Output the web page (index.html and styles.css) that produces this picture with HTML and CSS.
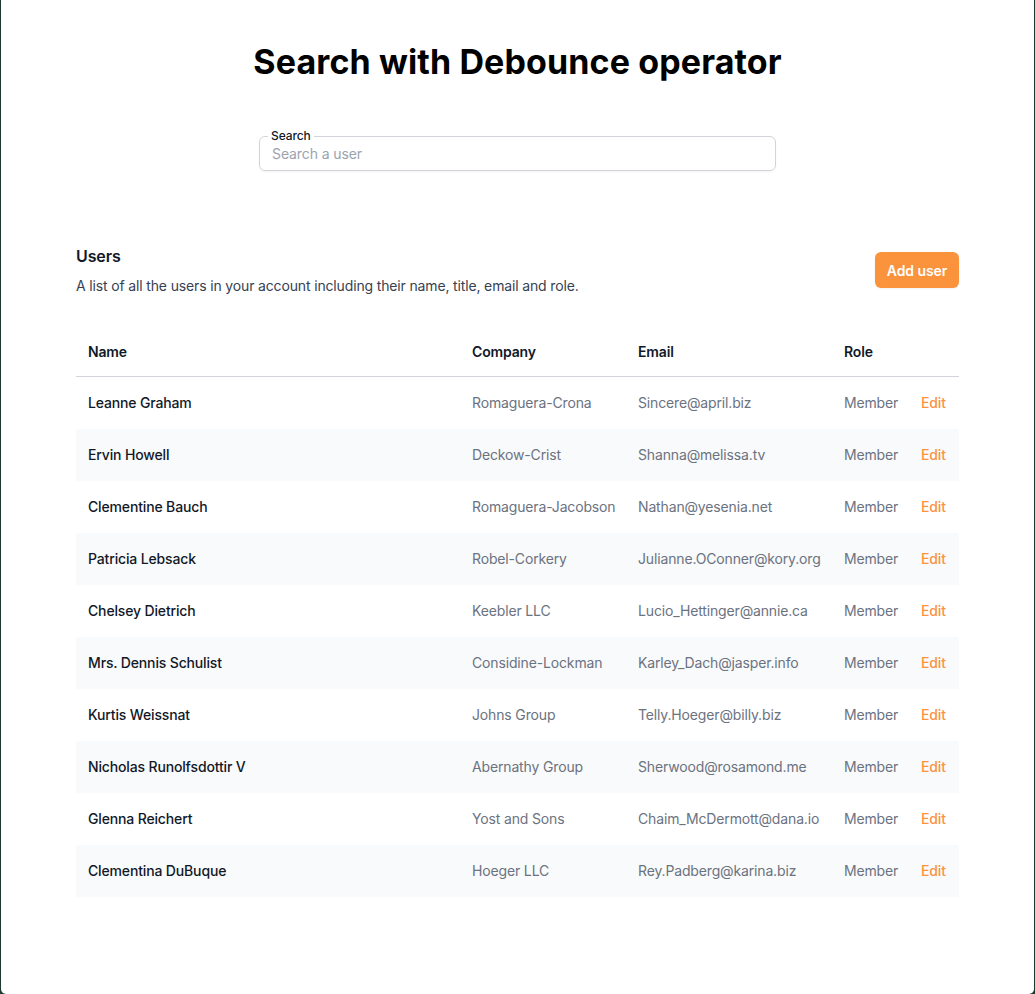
FILE: index.html
```html
<!DOCTYPE html>
<html lang="en">
<head>
<meta charset="utf-8">
<title>Search with Debounce operator</title>
<link rel="stylesheet" href="styles.css">
</head>
<body>
<div class="page">
  <h1 class="title">Search with Debounce operator</h1>
  <fieldset class="search">
    <legend class="search-legend">Search</legend>
    <input class="search-input" type="text" placeholder="Search a user">
  </fieldset>
  <section class="users">
    <div class="users-head">
      <div>
        <h2 class="users-title">Users</h2>
        <p class="users-desc">A list of all the users in your account including their name, title, email and role.</p>
      </div>
      <button class="add-btn" type="button">Add user</button>
    </div>
    <table class="table">
      <colgroup>
        <col class="c-name"><col class="c-company"><col class="c-email"><col class="c-role"><col class="c-edit">
      </colgroup>
      <thead>
        <tr><th>Name</th><th>Company</th><th>Email</th><th>Role</th><th></th></tr>
      </thead>
      <tbody>
        <tr><td class="name">Leanne Graham</td><td>Romaguera-Crona</td><td>Sincere@april.biz</td><td>Member</td><td class="edit">Edit</td></tr>
        <tr><td class="name">Ervin Howell</td><td>Deckow-Crist</td><td>Shanna@melissa.tv</td><td>Member</td><td class="edit">Edit</td></tr>
        <tr><td class="name">Clementine Bauch</td><td>Romaguera-Jacobson</td><td>Nathan@yesenia.net</td><td>Member</td><td class="edit">Edit</td></tr>
        <tr><td class="name">Patricia Lebsack</td><td>Robel-Corkery</td><td>Julianne.OConner@kory.org</td><td>Member</td><td class="edit">Edit</td></tr>
        <tr><td class="name">Chelsey Dietrich</td><td>Keebler LLC</td><td>Lucio_Hettinger@annie.ca</td><td>Member</td><td class="edit">Edit</td></tr>
        <tr><td class="name">Mrs. Dennis Schulist</td><td>Considine-Lockman</td><td>Karley_Dach@jasper.info</td><td>Member</td><td class="edit">Edit</td></tr>
        <tr><td class="name">Kurtis Weissnat</td><td>Johns Group</td><td>Telly.Hoeger@billy.biz</td><td>Member</td><td class="edit">Edit</td></tr>
        <tr><td class="name">Nicholas Runolfsdottir V</td><td>Abernathy Group</td><td>Sherwood@rosamond.me</td><td>Member</td><td class="edit">Edit</td></tr>
        <tr><td class="name">Glenna Reichert</td><td>Yost and Sons</td><td>Chaim_McDermott@dana.io</td><td>Member</td><td class="edit">Edit</td></tr>
        <tr><td class="name">Clementina DuBuque</td><td>Hoeger LLC</td><td>Rey.Padberg@karina.biz</td><td>Member</td><td class="edit">Edit</td></tr>
      </tbody>
    </table>
  </section>
</div>
</body>
</html>
```
FILE: styles.css
```css
* { box-sizing: border-box; }
html, body { margin: 0; padding: 0; }
body {
  background: #1c3a2d;
  font-family: Inter, "Liberation Sans", sans-serif;
  color: #111827;
  -webkit-font-smoothing: antialiased;
}
.page {
  background: #ffffff;
  margin: 0 1px;
  min-height: 994px;
  border-radius: 0 0 5px 5px;
  padding-top: 42px;
  overflow: hidden;
}
.title {
  margin: 0;
  text-align: center;
  font-size: 34px;
  line-height: 40px;
  font-weight: 700;
  color: #000000;
  letter-spacing: 0.12px;
}
.search {
  width: 517px;
  margin: 47px auto 0;
  border: 1px solid #d1d5db;
  border-radius: 6px;
  padding: 0 12px 6px;
  box-shadow: 0 1px 2px rgba(0,0,0,0.05);
}
.search-legend {
  font-size: 12px;
  line-height: 14px;
  padding: 0 3px;
  margin-left: -4px;
  color: #111827;
  font-weight: 500;
  letter-spacing: -0.1px;
}
.search-input {
  display: block;
  width: 100%;
  border: 0;
  outline: none;
  padding: 0;
  margin-top: 1px;
  height: 20px;
  font-family: inherit;
  font-size: 14px;
  line-height: 20px;
  color: #111827;
  background: transparent;
  letter-spacing: -0.1px;
}
.search-input::placeholder { color: #9ca3af; }
.users {
  width: 883px;
  margin: 73px auto 0;
}
.users-head {
  display: flex;
  align-items: center;
  justify-content: space-between;
}
.users-title {
  margin: 0;
  font-size: 16px;
  line-height: 24px;
  font-weight: 600;
  color: #111827;
  letter-spacing: -0.1px;
}
.users-desc {
  margin: 8px 0 0;
  font-size: 14px;
  line-height: 20px;
  color: #374151;
  letter-spacing: -0.15px;
}
.add-btn {
  background: #fb923c;
  color: #ffffff;
  border: 0;
  border-radius: 6px;
  height: 36px;
  width: 84px;
  padding: 0;
  font-family: inherit;
  font-size: 14px;
  font-weight: 600;
  letter-spacing: -0.1px;
  box-shadow: 0 1px 2px rgba(0,0,0,0.05);
}
.table {
  margin-top: 32px;
  width: 883px;
  table-layout: fixed;
  border-collapse: collapse;
}
.c-name { width: 384px; }
.c-company { width: 166px; }
.c-email { width: 206px; }
.c-role { width: 77px; }
.c-edit { width: 50px; }
.table th {
  text-align: left;
  font-size: 14px;
  line-height: 20px;
  font-weight: 600;
  color: #111827;
  padding: 14px 12px 14px;
  border-bottom: 1px solid #d1d5db;
  letter-spacing: -0.15px;
}
.table td {
  font-size: 14px;
  line-height: 20px;
  color: #6b7280;
  padding: 16px 12px;
  white-space: nowrap;
  letter-spacing: -0.15px;
}
.table tbody tr:nth-child(even) { background: #f9fafb; }
.table td.name { color: #111827; font-weight: 500; }
.table td.edit { color: #fb923c; font-weight: 500; }
```
